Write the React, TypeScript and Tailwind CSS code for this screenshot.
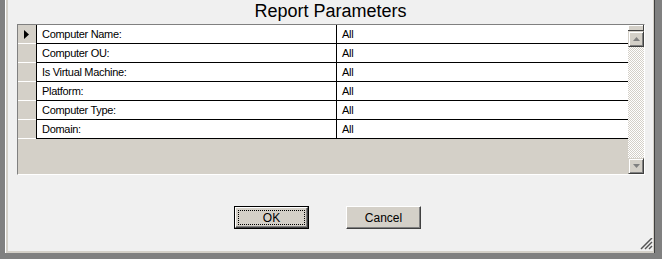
const rows = [
  { label: 'Computer Name:', value: 'All' },
  { label: 'Computer OU:', value: 'All' },
  { label: 'Is Virtual Machine:', value: 'All' },
  { label: 'Platform:', value: 'All' },
  { label: 'Computer Type:', value: 'All' },
  { label: 'Domain:', value: 'All' },
];

const font = "font-['Liberation_Sans',Arial,sans-serif]";

function ScrollButton({ dir }: { dir: 'up' | 'down' }) {
  return (
    <div className="h-[16px] w-[16px] bg-[#d4d0c8] border-t border-l border-t-[#d4d0c8] border-l-[#d4d0c8] border-r border-b border-r-[#404040] border-b-[#404040] shadow-[inset_1px_1px_#ffffff,inset_-1px_-1px_#808080] flex items-center justify-center">
      <svg width="7" height="4" viewBox="0 0 7 4">
        {dir === 'up' ? (
          <polygon points="3.5,0 7,4 0,4" fill="#808080" />
        ) : (
          <polygon points="0,0 7,0 3.5,4" fill="#808080" />
        )}
      </svg>
    </div>
  );
}

export default function App() {
  return (
    <div className={`w-[662px] h-[259px] bg-[#808080] flex ${font}`}>
      <div className="ml-[5px] w-[650px] h-[253px] border-l border-white border-r border-r-[#404040]">
        <div className="relative h-full border-l-2 border-l-[#d4d0c8] border-b-2 border-b-[#d4d0c8] border-r border-r-[#d4d0c8] bg-[#f0f0f0] flex flex-col">
          {/* Title */}
          <div className="h-[24px] pt-[1px] flex justify-center">
            <span className="text-[18px] leading-[20px] text-black">Report Parameters</span>
          </div>

          {/* Grid */}
          <div className="ml-[9px] w-[628px] h-[151px] border-t border-l border-t-[#808080] border-l-[#808080] border-r border-b border-white flex">
            <div className="w-[610px] flex flex-col bg-[#d4d0c8]">
              {rows.map((r, i) => (
                <div key={r.label} className="flex h-[19px]">
                  <div className="w-[18px] border-b border-white bg-[#d4d0c8] flex items-center pl-[6px]">
                    {i === 0 && (
                      <svg width="5" height="9" viewBox="0 0 5 9">
                        <polygon points="0,0 5,4.5 0,9" fill="#000" />
                      </svg>
                    )}
                  </div>
                  <div className="flex-1 flex bg-white border-l border-b border-black text-[11px] tracking-[-0.3px] text-black">
                    <div className="w-[300px] border-r border-black pl-[5px] flex items-center">{r.label}</div>
                    <div className="flex-1 pl-[5px] flex items-center">{r.value}</div>
                  </div>
                </div>
              ))}
            </div>
            <div className="w-[16px] flex flex-col">
              <div className="h-[6px] bg-[#d4d0c8] border-r border-b border-r-[#404040] border-b-[#404040] shadow-[inset_1px_1px_#ffffff]" />
              <ScrollButton dir="up" />
              <div className="flex-1 bg-[repeating-conic-gradient(#d4d0c8_0_25%,#ffffff_0_50%)] bg-[length:2px_2px]" />
              <ScrollButton dir="down" />
            </div>
          </div>

          {/* Buttons */}
          <div className="mt-[31px] flex justify-center gap-[37px] pr-[6px] text-[12px] text-black">
            <div className="w-[75px] h-[23px] border border-black">
              <div className="h-full bg-[#d4d0c8] border-t border-l border-white border-r border-b border-r-[#404040] border-b-[#404040] shadow-[inset_-1px_-1px_#808080] p-[2px]">
                <div className="h-full border border-dotted border-black flex items-center justify-center">OK</div>
              </div>
            </div>
            <div className="w-[75px] h-[23px] bg-[#d4d0c8] border-t border-l border-white border-r border-b border-r-[#404040] border-b-[#404040] shadow-[inset_-1px_-1px_#808080] flex items-center justify-center">
              Cancel
            </div>
          </div>

          {/* Size grip */}
          <svg className="absolute right-[0px] bottom-[1px]" width="13" height="12" viewBox="0 0 13 12">
            <line x1="12" y1="0" x2="1" y2="11" stroke="#555555" strokeWidth="1.5" />
            <line x1="12" y1="4" x2="5" y2="11" stroke="#555555" strokeWidth="1.5" />
            <line x1="12" y1="8" x2="9" y2="11" stroke="#555555" strokeWidth="1.5" />
          </svg>
        </div>
      </div>
    </div>
  );
}
